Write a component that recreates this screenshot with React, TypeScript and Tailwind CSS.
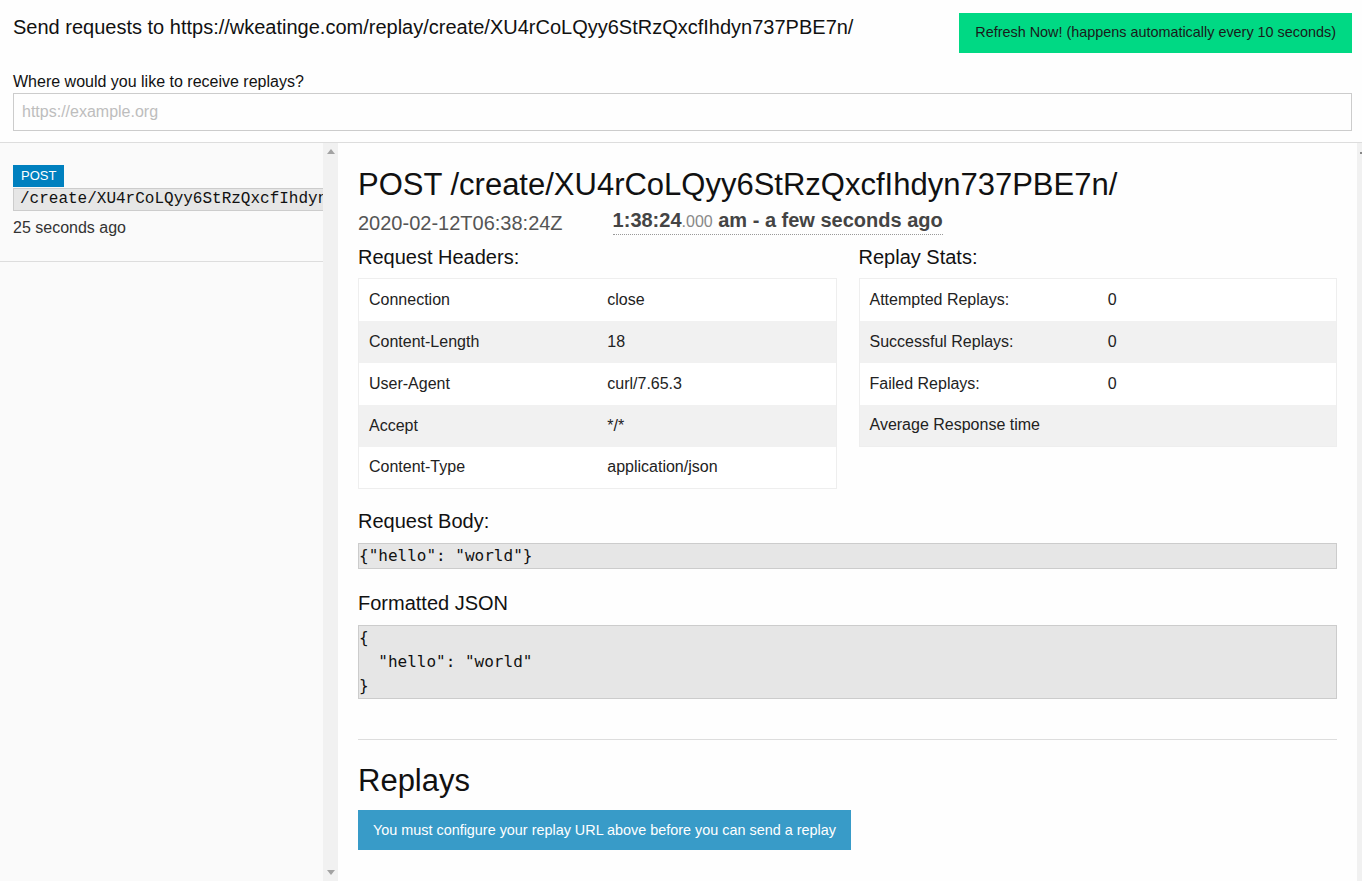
const SANS = "font-['Liberation_Sans',Arial,sans-serif]";

const HEADERS: [string, string][] = [
  ["Connection", "close"],
  ["Content-Length", "18"],
  ["User-Agent", "curl/7.65.3"],
  ["Accept", "*/*"],
  ["Content-Type", "application/json"],
];

const STATS: [string, string][] = [
  ["Attempted Replays:", "0"],
  ["Successful Replays:", "0"],
  ["Failed Replays:", "0"],
  ["Average Response time", ""],
];

function KeyValueTable({ rows }: { rows: [string, string][] }) {
  return (
    <table className="w-full table-fixed border-collapse border border-[#eeeeee] text-base text-[#222]">
      <tbody>
        {rows.map(([key, value], index) => (
          <tr key={key} className={index % 2 === 1 ? "bg-[#f1f1f1]" : "bg-white"}>
            <td className="h-[42px] px-[10px] align-middle">{key}</td>
            <td className="h-[42px] px-[10px] align-middle">{value}</td>
          </tr>
        ))}
      </tbody>
    </table>
  );
}

function ScrollArrow({ down }: { down?: boolean }) {
  return (
    <svg width="8" height="5" viewBox="0 0 8 5" className="block">
      <path d={down ? "M0 0 H8 L4 5 Z" : "M0 5 H8 L4 0 Z"} fill="#a3a3a3" />
    </svg>
  );
}

export default function App() {
  return (
    <div className={`${SANS} flex h-[881px] flex-col overflow-hidden bg-[#fefefe] text-[#111]`}>
      <header className="shrink-0 border-b border-[#dddddd] px-[13px] pb-[11px] pt-[13px]">
        <div className="flex items-start justify-between">
          <h1 className="text-[20px] leading-[28px]">
            Send requests to https://wkeatinge.com/replay/create/XU4rCoLQyy6StRzQxcfIhdyn737PBE7n/
          </h1>
          <button className="mr-[-3px] h-10 bg-[#00d984] px-[16px] text-[14.4px] text-[#1a1a1a]">
            Refresh Now! (happens automatically every 10 seconds)
          </button>
        </div>
        <label className="mt-[18px] block text-base leading-[22px] text-[#111]">
          Where would you like to receive replays?
        </label>
        <input
          type="text"
          placeholder="https://example.org"
          className="block h-[38px] w-[calc(100%+3px)] border border-[#cccccc] bg-[#fefefe] px-[8px] text-base outline-none placeholder:text-[#bdbdbd]"
        />
      </header>

      <div className="flex min-h-0 flex-1">
        <aside className="flex w-[338px] shrink-0">
          <div className="w-[323px] overflow-hidden bg-[#fafafa]">
            <div className="border-b border-[#dddddd] pb-[22px] pl-[13px] pt-[22px]">
              <div className="w-max bg-[#0080bf] px-[8px] text-[13px] leading-[22px] text-white">
                POST
              </div>
              <div className="mt-[1px] w-max whitespace-nowrap border border-[#cccccc] bg-[#e6e6e6] px-[6px] font-['Liberation_Mono',monospace] text-base leading-[21px] text-[#111]">
                /create/XU4rCoLQyy6StRzQxcfIhdyn737PBE7n/
              </div>
              <p className="mt-[6px] text-base leading-[22px] text-[#333]">25 seconds ago</p>
            </div>
          </div>
          <div className="flex w-[15px] flex-col items-center justify-between bg-[#f1f1f1] py-[6px]">
            <ScrollArrow />
            <ScrollArrow down />
          </div>
        </aside>

        <main className="min-w-0 flex-1 px-[20px] pt-[23px]">
          <h2 className="text-[31px] leading-[37px] text-[#111]">
            POST /create/XU4rCoLQyy6StRzQxcfIhdyn737PBE7n/
          </h2>
          <div className="mt-[5px] flex items-end text-[#444]">
            <span className="text-[20px] leading-[24px] text-[#555]">2020-02-12T06:38:24Z</span>
            <span className="ml-[50px] border-b border-dotted border-[#999] text-[20px] font-bold leading-[24px]">
              1:38:24<span className="text-base font-normal text-[#888]">.000</span> am - a few seconds ago
            </span>
          </div>

          <div className="mt-[10px] grid grid-cols-2 gap-[22px]">
            <section>
              <h3 className="text-[20px] leading-[24px]">Request Headers:</h3>
              <div className="mt-[9px]">
                <KeyValueTable rows={HEADERS} />
              </div>
            </section>
            <section>
              <h3 className="text-[20px] leading-[24px]">Replay Stats:</h3>
              <div className="mt-[9px]">
                <KeyValueTable rows={STATS} />
              </div>
            </section>
          </div>

          <h3 className="mt-[20px] text-[20px] leading-[24px]">Request Body:</h3>
          <pre className="mt-[10px] border border-[#cccccc] bg-[#e6e6e6] font-['DejaVu_Sans_Mono',monospace] text-base leading-[24px] text-[#111]">
            {'{"hello": "world"}'}
          </pre>

          <h3 className="mt-[22px] text-[20px] leading-[24px]">Formatted JSON</h3>
          <pre className="mt-[10px] border border-[#cccccc] bg-[#e6e6e6] font-['DejaVu_Sans_Mono',monospace] text-base leading-[24px] text-[#111]">
            {'{\n  "hello": "world"\n}'}
          </pre>

          <hr className="mt-[40px] border-t border-[#dddddd]" />
          <h2 className="mt-[22px] text-[31px] leading-[37px]">Replays</h2>
          <div className="mt-[11px] inline-block bg-[#389bc8] px-[15px] text-[14.4px] leading-[40px] text-white">
            You must configure your replay URL above before you can send a replay
          </div>
        </main>

        <div className="relative w-[5px] shrink-0 bg-[#f1f1f1]">
          <div className="absolute right-0 top-[9px] h-[2px] w-[2px] bg-[#888]" />
        </div>
      </div>
    </div>
  );
}
